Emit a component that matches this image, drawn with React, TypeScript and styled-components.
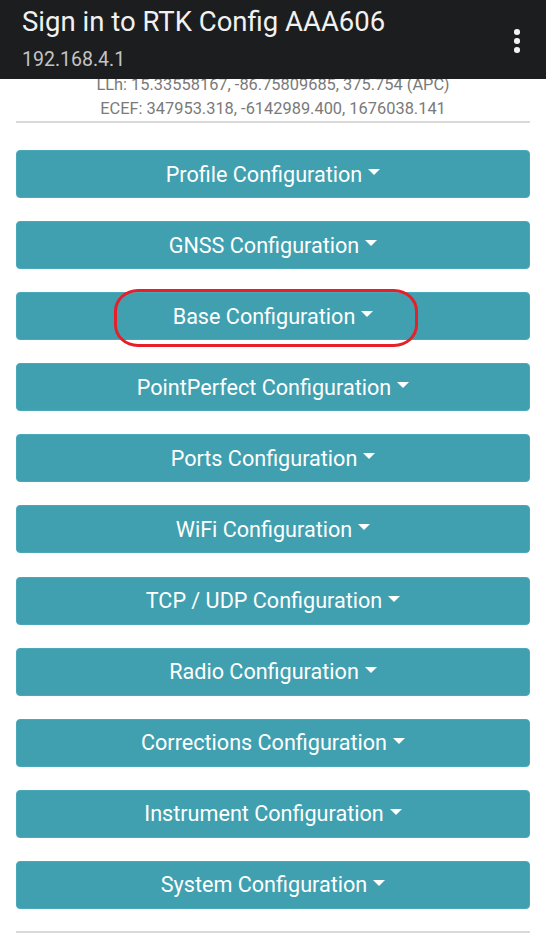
import React from "react";
import styled, { createGlobalStyle } from "styled-components";

const GlobalStyle = createGlobalStyle`
  html, body {
    margin: 0;
    padding: 0;
    background: #ffffff;
    font-family: Roboto, "Noto Sans", "Liberation Sans", sans-serif;
  }
  * { box-sizing: border-box; }
`;

const TopBar = styled.header`
  position: fixed;
  top: 0;
  left: 0;
  right: 0;
  height: 79px;
  background: #1c1d1f;
  display: flex;
  align-items: flex-start;
  justify-content: space-between;
  padding: 5px 24px 0 22px;
  z-index: 10;
`;

const TitleBlock = styled.div`
  display: flex;
  flex-direction: column;
`;

const Title = styled.h1`
  margin: 0;
  font-size: 27.5px;
  font-weight: 400;
  line-height: 34px;
  color: #f1f1f1;
`;

const Subtitle = styled.div`
  font-size: 19.5px;
  line-height: 26px;
  color: #c4c4c4;
  margin-top: 8px;
`;

const MenuButton = styled.button`
  border: 0;
  background: transparent;
  padding: 0;
  margin-top: 24px;
  width: 10px;
  display: flex;
  flex-direction: column;
  align-items: center;
  gap: 3.5px;
`;

const Dot = styled.span`
  width: 5.5px;
  height: 5.5px;
  border-radius: 50%;
  background: #f1f1f1;
`;

const Page = styled.main`
  padding: 73px 16px 0 16px;
`;

const Coords = styled.div`
  text-align: center;
  font-size: 16.4px;
  line-height: 24px;
  color: #7a7a7a;
`;

const Rule = styled.hr`
  border: 0;
  border-top: 2px solid #d9d9d9;
  margin: 0;
`;

const Stack = styled.div`
  display: flex;
  flex-direction: column;
  gap: 23.1px;
  padding: 27px 0 22px 0;
`;

const ConfigButton = styled.button`
  position: relative;
  width: 100%;
  height: 48px;
  border: 1px solid #4aa9b8;
  border-radius: 4px;
  background: #40a0b0;
  color: #ffffff;
  font-family: Roboto, "Noto Sans", "Liberation Sans", sans-serif;
  font-size: 21.6px;
  font-weight: 400;
  display: flex;
  align-items: center;
  justify-content: center;
  padding: 0;
`;

const Caret = styled.span`
  display: inline-block;
  margin-left: 6px;
  width: 0;
  height: 0;
  border-top: 6px solid #ffffff;
  border-left: 6px solid transparent;
  border-right: 6px solid transparent;
  transform: translateY(-2px);
`;

const Highlight = styled.span`
  position: absolute;
  left: 97px;
  top: -4px;
  width: 304px;
  height: 58px;
  border: 3px solid #e5202a;
  border-radius: 24px / 22px;
  pointer-events: none;
`;

const sections = [
  "Profile Configuration",
  "GNSS Configuration",
  "Base Configuration",
  "PointPerfect Configuration",
  "Ports Configuration",
  "WiFi Configuration",
  "TCP / UDP Configuration",
  "Radio Configuration",
  "Corrections Configuration",
  "Instrument Configuration",
  "System Configuration",
];

export default function App() {
  return (
    <>
      <GlobalStyle />
      <TopBar>
        <TitleBlock>
          <Title>Sign in to RTK Config AAA606</Title>
          <Subtitle>192.168.4.1</Subtitle>
        </TitleBlock>
        <MenuButton aria-label="More options">
          <Dot />
          <Dot />
          <Dot />
        </MenuButton>
      </TopBar>
      <Page>
        <Coords>LLh: 15.33558167, -86.75809685, 375.754 (APC)</Coords>
        <Coords>ECEF: 347953.318, -6142989.400, 1676038.141</Coords>
        <Rule />
        <Stack>
          {sections.map((name) => (
            <ConfigButton key={name}>
              {name}
              <Caret />
              {name === "Base Configuration" && <Highlight />}
            </ConfigButton>
          ))}
        </Stack>
        <Rule />
      </Page>
    </>
  );
}
